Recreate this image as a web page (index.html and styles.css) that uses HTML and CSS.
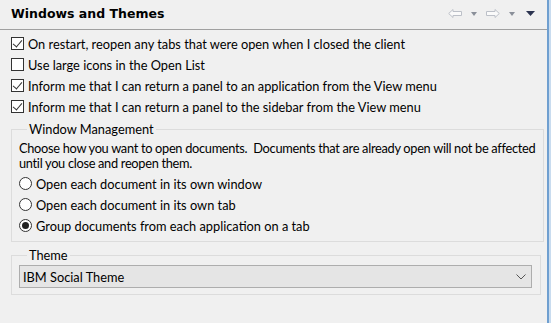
FILE: index.html
```html
<!DOCTYPE html>
<html>
<head>
<meta charset="utf-8">
<link rel="stylesheet" href="styles.css">
</head>
<body>
<div class="frame">
  <div class="panel">
    <div class="header">
      <div class="title">Windows and Themes</div>
      <div class="nav">
        <svg class="arrow" width="14" height="9" viewBox="0 0 14 9"><path d="M0.7 4.5 L5 0.5 L5 2.5 L13.5 2.5 L13.5 6.5 L5 6.5 L5 8.5 Z" fill="#fafafa" stroke="#bcc0c8"/></svg>
        <svg class="tri" width="6" height="4" viewBox="0 0 6 4"><path d="M0 0 H6 L3 4 Z" fill="#8a8f99"/></svg>
        <svg class="arrow" width="14" height="9" viewBox="0 0 14 9"><path d="M13.3 4.5 L9 0.5 L9 2.5 L0.5 2.5 L0.5 6.5 L9 6.5 L9 8.5 Z" fill="#fafafa" stroke="#bcc0c8"/></svg>
        <svg class="tri" width="6" height="4" viewBox="0 0 6 4"><path d="M0 0 H6 L3 4 Z" fill="#8a8f99"/></svg>
        <svg class="tri dark" width="9" height="5" viewBox="0 0 9 5"><path d="M0 0 H9 L4.5 5 Z" fill="#2c3450"/></svg>
      </div>
    </div>
    <div class="content">
      <label class="row"><span class="check on"></span>On restart, reopen any tabs that were open when I closed the client</label>
      <label class="row"><span class="check"></span>Use large icons in the Open List</label>
      <label class="row"><span class="check on"></span>Inform me that I can return a panel to an application from the View menu</label>
      <label class="row"><span class="check on"></span>Inform me that I can return a panel to the sidebar from the View menu</label>

      <fieldset class="group wm">
        <legend>Window Management</legend>
        <p class="desc">Choose how you want to open documents.&nbsp; Documents that are already open will not be affected<br>until you close and reopen them.</p>
        <label class="row radio-row"><span class="radio"></span>Open each document in its own window</label>
        <label class="row radio-row"><span class="radio"></span>Open each document in its own tab</label>
        <label class="row radio-row"><span class="radio on"></span>Group documents from each application on a tab</label>
      </fieldset>

      <fieldset class="group theme">
        <legend>Theme</legend>
        <div class="combo"><span>IBM Social Theme</span>
          <svg width="10" height="6" viewBox="0 0 10 6"><path d="M0.5 0.5 L5 5 L9.5 0.5" fill="none" stroke="#555" stroke-width="1"/></svg>
        </div>
      </fieldset>
    </div>
  </div>
  <div class="edge"></div>
</div>
</body>
</html>
```
FILE: styles.css
```css
* { box-sizing: border-box; }
html, body { margin: 0; padding: 0; }
body {
  width: 551px; height: 323px; overflow: hidden;
  background: #f0f0f0;
  font-family: "Lato", "Noto Sans", sans-serif;
  font-size: 12.8px;
  color: #000;
}
.frame { display: flex; height: 323px; }
.panel { width: 547px; background: #f0f0f0; }
.edge {
  width: 4px; height: 323px;
  border-left: 2px solid #6f9fd0;
  background: #c9dcef;
}
.header {
  height: 30px;
  display: flex; align-items: center; justify-content: space-between;
  border-bottom: 1px solid #a0a0a0;
  padding: 0 12px 0 11px;
}
.title {
  font-family: "DejaVu Sans", sans-serif;
  font-weight: bold; font-size: 12.5px;
  padding-bottom: 2px;
}
.nav { display: flex; align-items: center; gap: 9px; padding-bottom: 2px; }
.nav .dark { margin-left: 2px; }
.content { padding: 3px 0 0 11px; }
.row {
  display: flex; align-items: center; height: 21px; white-space: nowrap;
}
.check {
  width: 13px; height: 13px; border: 1px solid #333; background: #fff;
  margin-right: 4px; flex: none; position: relative;
}
.check.on::after {
  content: ""; position: absolute; left: 3px; top: 0px;
  width: 4px; height: 8px;
  border: solid #333; border-width: 0 1px 1px 0;
  transform: rotate(40deg);
}
.group {
  margin: 0 6px 0 0; padding: 0 8px 0 7px;
  border: 1px solid #dcdcdc; border-radius: 0;
}
.group legend { padding: 0 2px; margin-left: 8px; line-height: 14px; }
.wm { margin-top: 5px; padding-bottom: 5px; }
.desc { margin: 5px 0 2px 0; line-height: 15px; white-space: nowrap; letter-spacing: -0.3px; }
.radio {
  width: 13px; height: 13px; border: 1px solid #333; border-radius: 50%;
  background: #fff; margin-right: 4px; flex: none; position: relative;
}
.radio.on::after {
  content: ""; position: absolute; left: 2px; top: 2px;
  width: 7px; height: 7px; border-radius: 50%; background: #222;
}
.theme { margin-top: 6px; padding-top: 3px; padding-bottom: 6px; }
.combo {
  height: 23px; border: 1px solid #adadad; background: #e5e5e5;
  display: flex; align-items: center; justify-content: space-between;
  padding: 0 5px 0 3px;
}
```
